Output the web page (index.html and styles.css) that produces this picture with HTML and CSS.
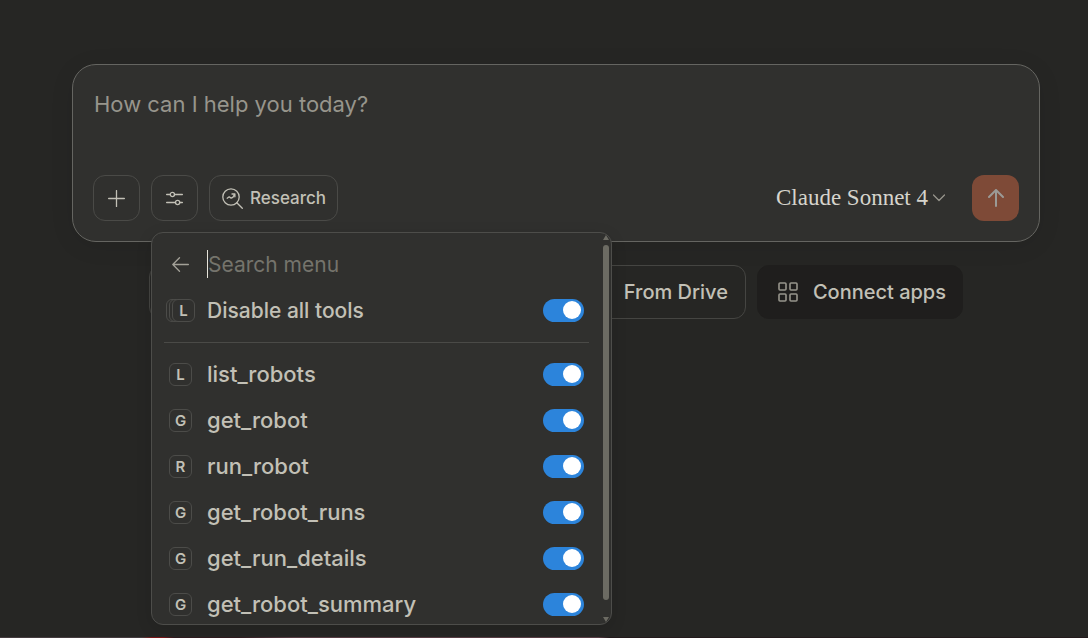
FILE: index.html
```html
<!DOCTYPE html>
<html lang="en">
<head>
<meta charset="utf-8">
<meta name="viewport" content="width=device-width, initial-scale=1">
<title>New chat</title>
<link rel="stylesheet" href="styles.css">
</head>
<body>
<main class="page">
  <form class="composer">
    <textarea class="prompt" rows="1" placeholder="How can I help you today?" aria-label="Message"></textarea>
    <div class="toolbar">
      <button class="tool" type="button" aria-label="Add content">
        <svg width="17" height="17" viewBox="0 0 17 17"><path d="M8.500 .6v15.800M.6 8.500h15.800"/></svg>
      </button>
      <div class="tool-menu">
        <button class="tool" type="button" aria-label="Tools" aria-expanded="true">
          <svg width="17" height="15" viewBox="0 0 17 15"><path d="M.6 3.500H4.300M8.500 3.500h7.900M.6 11.500h8.900M13.700 11.500h2.700"/><circle cx="6.400" cy="3.500" r="2.100"/><circle cx="11.600" cy="11.500" r="2.100"/></svg>
        </button>
        <div class="menu">
          <div class="row search">
            <button class="back" type="button" aria-label="Back">
              <svg width="17" height="15" viewBox="0 0 17 15"><path d="M16.400 7.500H.8M7.500 .8L.8 7.500l6.700 6.700"/></svg>
            </button>
            <input class="search-input" type="text" placeholder="Search menu" aria-label="Search menu">
          </div>
          <label class="row all"><span class="stack"><span class="key"></span><span class="key"></span><span class="key">L</span></span><span class="name">Disable all tools</span><input class="switch" type="checkbox" checked></label>
          <hr class="divider">
          <label class="row"><span class="key">L</span><span class="name">list_robots</span><input class="switch" type="checkbox" checked></label>
          <label class="row"><span class="key">G</span><span class="name">get_robot</span><input class="switch" type="checkbox" checked></label>
          <label class="row"><span class="key">R</span><span class="name">run_robot</span><input class="switch" type="checkbox" checked></label>
          <label class="row"><span class="key">G</span><span class="name">get_robot_runs</span><input class="switch" type="checkbox" checked></label>
          <label class="row"><span class="key">G</span><span class="name">get_run_details</span><input class="switch" type="checkbox" checked></label>
          <label class="row"><span class="key">G</span><span class="name">get_robot_summary</span><input class="switch" type="checkbox" checked></label>
          <div class="scrollbar" aria-hidden="true">
            <svg class="arrow" width="6" height="5" viewBox="0 0 6 5"><path d="M3 0l3 5H0z"/></svg>
            <span class="thumb"></span>
            <svg class="arrow" width="6" height="5" viewBox="0 0 6 5"><path d="M0 0h6L3 5z"/></svg>
          </div>
        </div>
      </div>
      <button class="tool research" type="button">
        <svg width="21" height="21" viewBox="0 0 21 21"><circle cx="9" cy="9" r="8.200"/><path d="M14.800 14.800l5.500 5.500M5.200 10.200l2-1.400 1.900 1.300 1.700-.7 1.800-3M10 6h2.900v2.800"/></svg>
        Research
      </button>
      <button class="model" type="button">Claude Sonnet 4
        <svg width="12" height="8" viewBox="0 0 12 8"><path d="M.5 1L6 6.500 11.500 1"/></svg>
      </button>
      <button class="send" type="submit" aria-label="Send message">
        <svg width="16" height="18" viewBox="0 0 16 18"><path d="M8 17V1.500M1 8l7-7 7 7"/></svg>
      </button>
    </div>
  </form>
  <div class="chips">
    <button class="chip wide" type="button">From Drive</button>
    <button class="chip filled" type="button">
      <svg width="20" height="20" viewBox="0 0 20 20"><rect x="1" y="1" width="7" height="7" rx="1"/><rect x="12" y="1" width="7" height="7" rx="1"/><rect x="1" y="12" width="7" height="7" rx="1"/><rect x="12" y="12" width="7" height="7" rx="1"/></svg>
      Connect apps
    </button>
  </div>
</main>
<div class="edge"></div>
</body>
</html>
```
FILE: styles.css
```css
* { box-sizing: border-box; }

body {
  margin: 0;
  min-height: 100vh;
  display: flex;
  flex-direction: column;
  background: #262624;
  color: #c2c0b6;
  font-family: Inter, "Liberation Sans", sans-serif;
}

button, input, textarea { font: inherit; color: inherit; margin: 0; }
button { background: none; border: 0; padding: 0; cursor: pointer; }
svg { display: block; flex: none; fill: none; stroke: currentColor; stroke-width: 1.3; stroke-linecap: round; stroke-linejoin: round; }

.page { flex: 1; padding: 64px 48px 0 72px; }

.composer {
  display: flex;
  flex-direction: column;
  gap: 48px;
  padding: 22px 20px 20px;
  border: 1px solid #656561;
  border-radius: 24px;
  background: #30302e;
  box-shadow: 0 4px 24px rgba(0, 0, 0, .08);
}

.prompt {
  width: 100%;
  height: 40px;
  padding: 0 1px;
  border: 0;
  outline: 0;
  resize: none;
  overflow: hidden;
  background: none;
  font-size: 22px;
  line-height: 34px;
}
.prompt::placeholder { color: #97958c; opacity: 1; }

.toolbar { display: flex; align-items: center; gap: 11px; }

.tool {
  display: flex;
  align-items: center;
  justify-content: center;
  width: 47px;
  height: 46px;
  border: 1px solid #4a4a47;
  border-radius: 12px;
}
.research { width: auto; gap: 7px; padding: 0 11px 0 12px; font-size: 17px; font-weight: 500; }

.model {
  display: flex;
  align-items: center;
  gap: 5px;
  margin-left: auto;
  margin-right: 16px;
  color: #d6d4cc;
  font-family: "Liberation Serif", serif;
  font-size: 23px;
}
.model svg { color: #97958c; }

.send {
  display: flex;
  align-items: center;
  justify-content: center;
  width: 47px;
  height: 46px;
  border-radius: 12px;
  background: #7e4a37;
  color: #9b9a96;
}
.send svg { stroke-width: 2; }

.tool-menu { position: relative; }

.menu {
  position: absolute;
  z-index: 2;
  top: calc(100% + 11px);
  left: 0;
  width: 461px;
  height: 393px;
  padding: 8px 22px 0 12px;
  overflow: hidden;
  border: 1px solid #4d4d4a;
  border-radius: 12px;
  background: #30302e;
  box-shadow: 0 4px 16px rgba(0, 0, 0, .12);
}

.row {
  display: flex;
  align-items: center;
  height: 46px;
  padding: 0 5px;
  font-size: 22px;
  font-weight: 500;
}
.name { flex: 1; margin-left: 15px; }
.search { font-size: 21px; font-weight: 400; }
.all { font-size: 21px; }

.back { width: 23px; display: flex; justify-content: center; color: #a3a198; }
.search-input {
  flex: 1;
  min-width: 0;
  height: 28px;
  margin-left: 15px;
  padding: 0;
  border: 0;
  border-left: 1px solid #e5e3da;
  outline: 0;
  background: none;
}
.search-input::placeholder { color: #75746c; opacity: 1; }

.key {
  display: flex;
  align-items: center;
  justify-content: center;
  flex: none;
  width: 23px;
  height: 23px;
  border: 1px solid #4c4c49;
  border-radius: 6px;
  background: #30302e;
  font-size: 15px;
  font-weight: 600;
  line-height: 21px;
}
.stack { display: flex; flex: none; margin-left: -3px; }
.stack .key + .key { margin-left: -20px; }
.all .name { margin-left: 12px; }

.switch {
  appearance: none;
  display: flex;
  align-items: center;
  justify-content: flex-end;
  flex: none;
  width: 41px;
  height: 23px;
  padding: 0 3px;
  border-radius: 12px;
  background: #2c84db;
}
.switch::before { content: ""; width: 18px; height: 18px; border-radius: 50%; background: #fff; }
.switch:not(:checked) { justify-content: flex-start; background: #5a5a56; }

.divider { height: 1px; margin: 9px 0 8px; border: 0; background: #4a4a47; }

.scrollbar {
  position: absolute;
  top: 2px;
  right: 2px;
  bottom: 2px;
  width: 6px;
  display: flex;
  flex-direction: column;
  gap: 5px;
}
.scrollbar .arrow { fill: #6c6b63; stroke: none; }
.thumb { flex: 1; margin-bottom: 12px; border-radius: 3px; background: #6c6b63; }

.chips {
  display: flex;
  gap: 11px;
  max-width: 814px;
  margin: 23px auto 0;
}
.chip {
  display: flex;
  align-items: center;
  gap: 15px;
  height: 54px;
  padding: 0 17px;
  border: 1px solid #454542;
  border-radius: 12px;
  font-size: 20px;
  font-weight: 500;
}
.chip svg { color: #97958c; stroke-width: 1.6; }
.wide { flex: 1; justify-content: flex-end; }
.filled { padding: 0 16px 0 20px; border-color: #1f1e1d; background: #1f1e1d; }

.edge {
  height: 1px;
  background: linear-gradient(90deg, #453c3f 0 13%, #7c1618 14% 15%, #301c20 16% 22%, #593d45 27% 55%, #241a1c 56%);
}
```
